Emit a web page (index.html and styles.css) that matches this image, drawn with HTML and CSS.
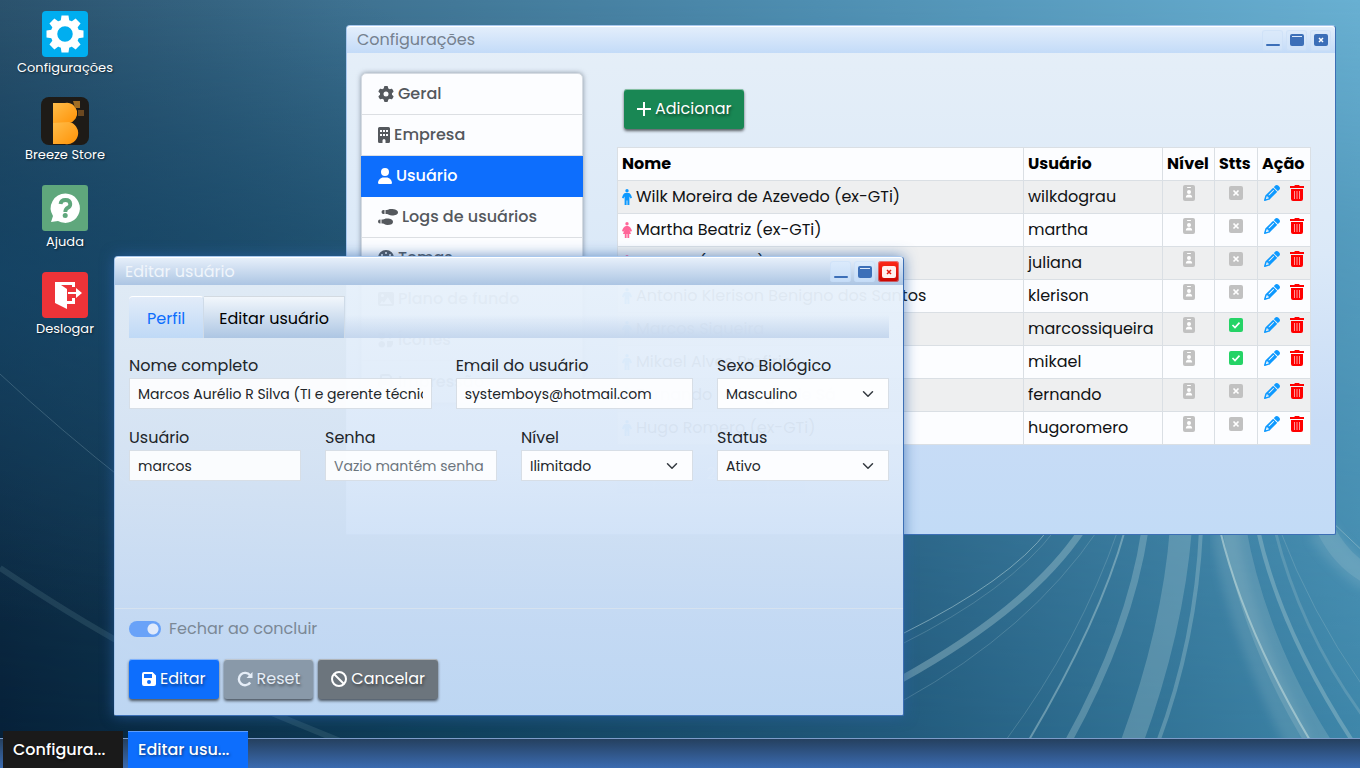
FILE: index.html
```html
<!DOCTYPE html>
<html lang="pt-BR">
<head>
<meta charset="utf-8">
<meta name="viewport" content="width=device-width, initial-scale=1">
<title>Editar usuário</title>
<link rel="stylesheet" href="styles.css">
</head>
<body>
<svg class="defs" aria-hidden="true">
  <symbol id="gear" viewBox="0 0 512 512"><path d="M495.9 166.6c3.2 8.7 .5 18.4-6.4 24.6l-43.3 39.4c1.1 8.3 1.7 16.8 1.7 25.4s-.6 17.1-1.7 25.4l43.3 39.4c6.9 6.2 9.6 15.9 6.4 24.6c-4.4 11.9-9.7 23.3-15.8 34.3l-4.7 8.1c-6.6 11-14 21.4-22.1 31.2c-5.9 7.2-15.7 9.6-24.5 6.8l-55.7-17.7c-13.4 10.3-28.2 18.9-44 25.4l-12.5 57.1c-2 9.1-9 16.3-18.2 17.8c-13.8 2.3-28 3.5-42.5 3.5s-28.7-1.2-42.5-3.5c-9.2-1.5-16.2-8.7-18.2-17.8l-12.5-57.1c-15.8-6.5-30.6-15.1-44-25.4L83.1 425.9c-8.8 2.8-18.6 .3-24.5-6.8c-8.1-9.8-15.5-20.2-22.1-31.2l-4.7-8.1c-6.1-11-11.4-22.4-15.8-34.3c-3.2-8.7-.5-18.4 6.4-24.6l43.3-39.4C64.6 273.1 64 264.6 64 256s.6-17.1 1.7-25.4L22.4 191.2c-6.9-6.2-9.6-15.9-6.4-24.6c4.4-11.9 9.7-23.3 15.8-34.3l4.7-8.1c6.6-11 14-21.4 22.1-31.2c5.9-7.2 15.7-9.6 24.5-6.8l55.7 17.7c13.4-10.3 28.2-18.9 44-25.4l12.5-57.1c2-9.1 9-16.3 18.2-17.8C227.3 1.2 241.5 0 256 0s28.7 1.2 42.5 3.5c9.2 1.5 16.2 8.7 18.2 17.8l12.5 57.1c15.8 6.5 30.6 15.1 44 25.4l55.7-17.7c8.8-2.8 18.6-.3 24.5 6.8c8.1 9.8 15.5 20.2 22.1 31.2l4.7 8.1c6.1 11 11.4 22.4 15.8 34.3zM256 336a80 80 0 1 0 0-160 80 80 0 1 0 0 160z"/></symbol>
  <symbol id="building" viewBox="0 0 384 512"><path fill-rule="evenodd" d="M48 0h288a48 48 0 0 1 48 48v416a48 48 0 0 1-48 48h-96v-80a48 48 0 0 0-96 0v80H48a48 48 0 0 1-48-48V48A48 48 0 0 1 48 0zM64 96v64h64V96zM160 96v64h64V96zM256 96v64h64V96zM64 224v64h64v-64zM160 224v64h64v-64zM256 224v64h64v-64z"/></symbol>
  <symbol id="user" viewBox="0 0 448 512"><path d="M224 256A128 128 0 1 0 224 0a128 128 0 1 0 0 256zm-45.700 48C79.800 304 0 383.800 0 482.300 0 498.700 13.300 512 29.700 512h388.600c16.400 0 29.700-13.300 29.700-29.700C448 383.800 368.200 304 269.700 304z"/></symbol>
  <symbol id="shoes" viewBox="0 0 640 512"><path d="M416 0C352 0 320 24 288 32H240v128h48c34 0 76 48 160 48 112 0 192-32 192-96S560 0 416 0zM208 32h-32a64 64 0 0 0 0 128h32zM288 304c-64 0-96 24-128 32H112v128h48c34 0 60 48 144 48 112 0 176-32 176-96S420 304 288 304zM80 336H64a64 64 0 0 0 0 128h16z"/></symbol>
  <symbol id="palette" viewBox="0 0 512 512"><path fill-rule="evenodd" d="M512 256c0 50-42 88-92 88h-76c-27 0-48 22-48 48 0 34 24 40 24 66 0 32-28 54-64 54a256 256 0 1 1 256-256zM128 288a32 32 0 1 0-64 0 32 32 0 1 0 64 0zm0-96a32 32 0 1 0 0-64 32 32 0 1 0 0 64zM288 96a32 32 0 1 0-64 0 32 32 0 1 0 64 0zm96 96a32 32 0 1 0 0-64 32 32 0 1 0 0 64z"/></symbol>
  <symbol id="image" viewBox="0 0 512 512"><path fill-rule="evenodd" d="M64 32h384a64 64 0 0 1 64 64v320a64 64 0 0 1-64 64H64a64 64 0 0 1-64-64V96a64 64 0 0 1 64-64zm80 64a48 48 0 1 0 0 96 48 48 0 1 0 0-96zm170 106-128 176-56-64-66 102h384z"/></symbol>
  <symbol id="shapes" viewBox="0 0 512 512"><path d="M20 20h200v180L120 250 20 190zM290 130 380 20l110 110-110 100zM120 290a105 105 0 1 0 1 0zM290 290h190v100l-60 100H290z"/></symbol>
  <symbol id="printer" viewBox="0 0 512 512"><path fill-rule="evenodd" d="M128 0h232l88 88v104h0a64 64 0 0 1 64 64v112a32 32 0 0 1-32 32h-32v112H64V400H32a32 32 0 0 1-32-32V256a64 64 0 0 1 64-64V64a64 64 0 0 1 64-64zm0 64v128h256V96l-32-32zm0 288v96h256v-96z"/></symbol>
  <symbol id="plus" viewBox="0 0 14 14"><path d="M6 0h2v6h6v2H8v6H6V8H0V6h6z"/></symbol>
  <symbol id="man" viewBox="0 0 10 16"><path d="M5 0a1.700 1.700 0 1 1 0 3.400A1.700 1.700 0 0 1 5 0zM3.500 4h3C8 4 9.200 6 10 8.800l-1.500.8L7.400 7.500V16H5.400v-4.500h-.8V16H2.600V7.500L1.500 9.600 0 8.800C.8 6 2 4 3.500 4z"/></symbol>
  <symbol id="woman" viewBox="0 0 10 16"><path d="M5 0a1.700 1.700 0 1 1 0 3.400A1.700 1.700 0 0 1 5 0zM4 4h2c1.500 0 3.200 2.400 4 5l-1.500.8-1.100-1.700L9 12H7.200v4H5.400v-4h-.8v4H2.800v-4H1l1.600-3.900-1.100 1.700L0 9c.8-2.600 2.500-5 4-5z"/></symbol>
  <symbol id="badge" viewBox="0 0 12 16"><rect width="12" height="16" rx="2"/><g fill="#fff"><rect x="4" y="2" width="4" height="1" rx=".5"/><circle cx="6" cy="7" r="2"/><path d="M2.800 12.500c0-2 1.300-3 3.200-3s3.200 1 3.200 3z"/></g></symbol>
  <symbol id="off" viewBox="0 0 14 14"><rect width="14" height="14" rx="2"/><path stroke="#fff" stroke-width="1.700" d="m4.500 4.500 5 5m0-5-5 5"/></symbol>
  <symbol id="on" viewBox="0 0 14 14"><rect width="14" height="14" rx="2"/><path fill="none" stroke="#fff" stroke-width="1.700" d="m3.500 7 2.500 2.500 4.500-4.800"/></symbol>
  <symbol id="pencil" viewBox="0 0 512 512"><path d="M410.300 231l11.300-11.300-33.900-33.900-62.100-62.100L291.700 89.800l-11.300 11.300-22.600 22.600L58.600 322.900c-10.400 10.400-18 23.300-22.200 37.400L1 480.700c-2.500 8.400-.2 17.500 6.100 23.700s15.300 8.500 23.700 6.100l120.300-35.400c14.100-4.200 27-11.800 37.400-22.200L387.700 253.700 410.300 231zM160 399.400l-9.100 22.700c-4 3.100-8.500 5.400-13.300 6.900L59.400 452l23-78.100c1.400-4.900 3.800-9.400 6.900-13.300l22.700-9.100v32c0 8.800 7.200 16 16 16h32zM362.700 18.700L348.300 33.200 325.700 55.800 314.300 67.100l33.900 33.900 62.100 62.100 33.900 33.900 11.300-11.300 22.600-22.600 14.500-14.500c25-25 25-65.500 0-90.500L453.300 18.700c-25-25-65.500-25-90.500 0zm-47.400 168l-144 144c-6.200 6.200-16.400 6.200-22.600 0s-6.200-16.400 0-22.600l144-144c6.200-6.200 16.400-6.200 22.600 0s6.200 16.400 0 22.600z"/></symbol>
  <symbol id="trash" viewBox="0 0 14 16"><path d="M5 0h4l.8 1H14v2H0V1h4.200zM1 4h12v10a2 2 0 0 1-2 2H3a2 2 0 0 1-2-2z"/><path stroke="#f99" d="M4.500 6v8M7 6v8m2.500-8v8"/></symbol>
  <symbol id="save" viewBox="0 0 14 14"><path fill-rule="evenodd" d="M2 0h8.500L14 3.500V12a2 2 0 0 1-2 2H2a2 2 0 0 1-2-2V2a2 2 0 0 1 2-2zm0 2v4h8V2zm5 6a2 2 0 1 0 0 4 2 2 0 0 0 0-4z"/></symbol>
  <symbol id="redo" viewBox="0 0 16 16"><path fill="none" stroke="currentColor" stroke-width="2.400" d="M13.200 11.500A6.200 6.200 0 1 1 13 4.300"/><path d="M15.500 1v6h-6z"/></symbol>
  <symbol id="ban" viewBox="0 0 16 16"><g fill="none" stroke="currentColor" stroke-width="2"><circle cx="8" cy="8" r="7"/><path d="m3 3 10 10"/></g></symbol>
  <symbol id="win-min" viewBox="0 0 14 14"><rect y="11" width="14" height="2" rx="1"/></symbol>
  <symbol id="win-max" viewBox="0 0 14 14"><rect y="1" width="14" height="12" rx="2"/><path stroke="#dceafc" d="M2 3.500h10"/></symbol>
  <symbol id="win-close" viewBox="0 0 14 14"><rect y="1" width="14" height="12" rx="2"/><path class="x" d="m5 5 4 4m0-4-4 4"/></symbol>
</svg>

<div class="desktop">
  <svg class="wallpaper" viewBox="0 0 1360 768" preserveAspectRatio="none" aria-hidden="true">
    <defs>
      <linearGradient id="sky" x1="0" x2="1" y1="0" y2="0"><stop offset="0" stop-color="#2f546d"/><stop offset=".25" stop-color="#3f7291"/><stop offset=".6" stop-color="#4f8fb2"/><stop offset="1" stop-color="#69b0d2"/></linearGradient>
      <linearGradient id="sea" x1="0" x2="1" y1="0" y2="0"><stop offset="0" stop-color="#041f37"/><stop offset=".3" stop-color="#0d3c57"/><stop offset=".66" stop-color="#20587a"/><stop offset="1" stop-color="#3d85a8"/></linearGradient>
      <linearGradient id="fade" x1="0" x2="0" y1="0" y2="1"><stop offset="0" stop-color="#000"/><stop offset=".3" stop-color="#777"/><stop offset="1" stop-color="#fff"/></linearGradient>
      <radialGradient id="mid" cx="0" cy=".36" r=".45"><stop offset="0" stop-color="#124a70" stop-opacity=".6"/><stop offset="1" stop-color="#124a70" stop-opacity="0"/></radialGradient>
      <mask id="down"><rect width="1360" height="768" fill="url(#fade)"/></mask>
      <filter id="soft"><feGaussianBlur stdDeviation="5"/></filter>
    </defs>
    <rect width="1360" height="768" fill="url(#sky)"/>
    <rect width="1360" height="768" fill="url(#sea)" mask="url(#down)"/>
    <rect width="1360" height="768" fill="url(#mid)"/>
    <g fill="none" stroke="#a6c8d0">
      <path filter="url(#soft)" stroke-width="26" stroke-opacity=".2" d="M1225 530Q1236 620 1300 745M1320 530q20 30 50 50"/>
      <path filter="url(#soft)" stroke-width="50" stroke-opacity=".3" d="M1206 -10v50"/>
      <path stroke-width="1" stroke-opacity=".6" d="M1048 530Q1010 580 904 633"/>
      <path stroke-width="1" stroke-opacity=".25" d="M1055 530Q1010 590 900 645M1098 530Q1030 630 904 700M1118 530Q1080 640 1006 740M1280 530Q1310 610 1362 685"/>
      <path stroke-width="7" stroke-opacity=".4" d="M1082 530Q1030 608 900 680"/>
      <path stroke-width="2" stroke-opacity=".5" d="M1125 530Q1100 620 1029 740"/>
      <path stroke-width="7" stroke-opacity=".35" d="M1145 530Q1130 630 1068 742"/>
      <path stroke-width="22" stroke-opacity=".32" d="M1181 528Q1173 630 1132 742"/>
      <path stroke-width="4" stroke-opacity=".35" d="M1201 530Q1196 640 1158 742"/>
      <path stroke-width="24" stroke-opacity=".25" d="M1234 528Q1254 640 1320 745"/>
      <path stroke-width="2" stroke="#b8d5d8" stroke-opacity=".65" d="M1220 530Q1244 630 1311 742"/>
      <path stroke-width="4" stroke-opacity=".4" d="M1258 530Q1280 630 1353 742"/>
      <path stroke-width="3" stroke-opacity=".25" d="M1275 530Q1300 630 1362 715"/>
      <path stroke-width="18" stroke-opacity=".2" d="M1326 530q15 30 42 45"/>
      <path stroke-width="1" stroke-opacity=".5" d="M1330 520l40 38"/>
      <path stroke-width="1" stroke-opacity=".25" d="M0 374Q60 430 130 485"/>
      <path stroke-width="6" stroke="#6c98a0" stroke-opacity=".2" d="M0 568Q70 615 130 648T350 745"/>
    </g>
  </svg>

  <nav class="shortcuts" aria-label="Atalhos">
    <button class="shortcut"><svg class="tile" viewBox="0 0 48 48"><rect x="1" y="1" width="46" height="46" rx="4" fill="#00aef0"/><g transform="translate(24 24)" fill="#fff"><path d="M-3.500-18.500h7l1 7h-9z"/><path d="M-3.500-18.500h7l1 7h-9z" transform="rotate(45)"/><path d="M-3.500-18.500h7l1 7h-9z" transform="rotate(90)"/><path d="M-3.500-18.500h7l1 7h-9z" transform="rotate(135)"/><path d="M-3.500-18.500h7l1 7h-9z" transform="rotate(180)"/><path d="M-3.500-18.500h7l1 7h-9z" transform="rotate(225)"/><path d="M-3.500-18.500h7l1 7h-9z" transform="rotate(270)"/><path d="M-3.500-18.500h7l1 7h-9z" transform="rotate(315)"/><circle r="11" fill="none" stroke="#fff" stroke-width="6.500"/></g></svg><span>Configurações</span></button>
    <button class="shortcut"><svg class="tile" viewBox="0 0 48 48"><defs><linearGradient id="amber" x1="0" y1="0" x2="1" y2="1"><stop offset="0" stop-color="#ffbd4a"/><stop offset="1" stop-color="#ff9206"/></linearGradient></defs><rect width="48" height="48" rx="8" fill="#1e1b17"/><path fill="url(#amber)" d="M12 6h12a10 10 0 0 1 4 20H12z"/><path fill="url(#amber)" d="M12 26l16-1a10.500 10.500 0 0 1-4 22H12z"/><path fill="#9f6d24" d="M32 4h7v7h-5z"/><path fill="#6b4820" d="M37 13h6v6h-6z"/></svg><span>Breeze Store</span></button>
    <button class="shortcut"><svg class="tile" viewBox="0 0 48 48"><rect x="1" y="1" width="46" height="46" rx="3" fill="#5fa77c"/><path fill="#fff" d="M24.500 9.500A14.700 14.700 0 1 1 17 37l-7 1 2-6A14.700 14.700 0 0 1 24.500 9.500z"/><path fill="none" stroke="#5fa77c" stroke-width="3.800" d="M19.500 20q.5-4 5-4t4.800 4q0 2.500-2.500 3.800t-2.500 4.200"/><circle cx="24.200" cy="31.500" r="2.500" fill="#5fa77c"/></svg><span>Ajuda</span></button>
    <button class="shortcut"><svg class="tile" viewBox="0 0 48 48"><rect x="1" y="1" width="46" height="46" rx="4" fill="#ee3338"/><path fill="#fff" d="M14 11h20v5h-3v-2H20l6 4v20l-12-6zM26 30h5v-3h3v6h-8z"/><path fill="#fff" d="M27 21h8v-4l6 5-6 5v-4h-8z"/></svg><span>Deslogar</span></button>
  </nav>

  <section class="window window-settings" aria-label="Configurações">
    <header class="titlebar"><h2>Configurações</h2>
      <div class="controls"><button aria-label="Minimizar"><svg><use href="#win-min"/></svg></button><button aria-label="Maximizar"><svg><use href="#win-max"/></svg></button><button aria-label="Fechar"><svg><use href="#win-close"/></svg></button></div>
    </header>
    <div class="settings">
      <nav class="menu">
        <a href="#"><svg class="w16"><use href="#gear"/></svg>Geral</a>
        <a href="#"><svg class="w12"><use href="#building"/></svg>Empresa</a>
        <a href="#" class="active"><svg class="w14"><use href="#user"/></svg>Usuário</a>
        <a href="#"><svg class="w20"><use href="#shoes"/></svg>Logs de usuários</a>
        <a href="#"><svg class="w16"><use href="#palette"/></svg>Temas</a>
        <a href="#"><svg class="w16"><use href="#image"/></svg>Plano de fundo</a>
        <a href="#"><svg class="w16"><use href="#shapes"/></svg>Ícones</a>
        <a href="#"><svg class="w16"><use href="#printer"/></svg>Impressão</a>
      </nav>
      <div class="users">
        <button class="btn success"><svg class="w14"><use href="#plus"/></svg>Adicionar</button>
        <div class="scroller">
          <table>
            <colgroup><col><col class="c-user"><col class="c-level"><col class="c-stts"><col class="c-action"></colgroup>
            <thead><tr><th>Nome</th><th>Usuário</th><th>Nível</th><th>Stts</th><th>Ação</th></tr></thead>
            <tbody>
              <tr><td><svg class="man"><use href="#man"/></svg>Wilk Moreira de Azevedo (ex-GTi)</td><td>wilkdograu</td><td class="mark"><svg class="w12"><use href="#badge"/></svg></td><td class="mark"><svg class="w14"><use href="#off"/></svg></td><td class="acts"><button aria-label="Editar"><svg class="w16"><use href="#pencil"/></svg></button><button aria-label="Excluir" class="del"><svg class="w14"><use href="#trash"/></svg></button></td></tr>
              <tr><td><svg class="woman"><use href="#woman"/></svg>Martha Beatriz (ex-GTi)</td><td>martha</td><td class="mark"><svg class="w12"><use href="#badge"/></svg></td><td class="mark"><svg class="w14"><use href="#off"/></svg></td><td class="acts"><button aria-label="Editar"><svg class="w16"><use href="#pencil"/></svg></button><button aria-label="Excluir" class="del"><svg class="w14"><use href="#trash"/></svg></button></td></tr>
              <tr><td><svg class="woman"><use href="#woman"/></svg>Juliana (ex-GTi)</td><td>juliana</td><td class="mark"><svg class="w12"><use href="#badge"/></svg></td><td class="mark"><svg class="w14"><use href="#off"/></svg></td><td class="acts"><button aria-label="Editar"><svg class="w16"><use href="#pencil"/></svg></button><button aria-label="Excluir" class="del"><svg class="w14"><use href="#trash"/></svg></button></td></tr>
              <tr><td><svg class="man"><use href="#man"/></svg>Antonio Klerison Benigno dos Santos</td><td>klerison</td><td class="mark"><svg class="w12"><use href="#badge"/></svg></td><td class="mark"><svg class="w14"><use href="#off"/></svg></td><td class="acts"><button aria-label="Editar"><svg class="w16"><use href="#pencil"/></svg></button><button aria-label="Excluir" class="del"><svg class="w14"><use href="#trash"/></svg></button></td></tr>
              <tr><td><svg class="man"><use href="#man"/></svg>Marcos Siqueira</td><td>marcossiqueira</td><td class="mark"><svg class="w12"><use href="#badge"/></svg></td><td class="mark on"><svg class="w14"><use href="#on"/></svg></td><td class="acts"><button aria-label="Editar"><svg class="w16"><use href="#pencil"/></svg></button><button aria-label="Excluir" class="del"><svg class="w14"><use href="#trash"/></svg></button></td></tr>
              <tr><td><svg class="man"><use href="#man"/></svg>Mikael Alves Profirio</td><td>mikael</td><td class="mark"><svg class="w12"><use href="#badge"/></svg></td><td class="mark on"><svg class="w14"><use href="#on"/></svg></td><td class="acts"><button aria-label="Editar"><svg class="w16"><use href="#pencil"/></svg></button><button aria-label="Excluir" class="del"><svg class="w14"><use href="#trash"/></svg></button></td></tr>
              <tr><td><svg class="man"><use href="#man"/></svg>Fernando Nobrega de Sá</td><td>fernando</td><td class="mark"><svg class="w12"><use href="#badge"/></svg></td><td class="mark"><svg class="w14"><use href="#off"/></svg></td><td class="acts"><button aria-label="Editar"><svg class="w16"><use href="#pencil"/></svg></button><button aria-label="Excluir" class="del"><svg class="w14"><use href="#trash"/></svg></button></td></tr>
              <tr><td><svg class="man"><use href="#man"/></svg>Hugo Romero (ex-GTi)</td><td>hugoromero</td><td class="mark"><svg class="w12"><use href="#badge"/></svg></td><td class="mark"><svg class="w14"><use href="#off"/></svg></td><td class="acts"><button aria-label="Editar"><svg class="w16"><use href="#pencil"/></svg></button><button aria-label="Excluir" class="del"><svg class="w14"><use href="#trash"/></svg></button></td></tr>
              <tr><td></td><td></td><td></td><td></td><td></td></tr>
            </tbody>
          </table>
        </div>
        <div class="pager"><button>‹</button><button>1</button><button>2</button><button>3</button><button>›</button></div>
      </div>
    </div>
  </section>

  <section class="window window-edit" aria-label="Editar usuário">
    <header class="titlebar"><h2>Editar usuário</h2>
      <div class="controls"><button aria-label="Minimizar"><svg><use href="#win-min"/></svg></button><button aria-label="Maximizar"><svg><use href="#win-max"/></svg></button><button aria-label="Fechar" class="close"><svg><use href="#win-close"/></svg></button></div>
    </header>
    <form class="edit">
      <div class="tabs"><button type="button">Perfil</button><button type="button" class="current">Editar usuário</button></div>
      <div class="fields">
        <label class="wide">Nome completo<input type="text" value="Marcos Aurélio R Silva (TI e gerente técnico)"></label>
        <label class="medium">Email do usuário<input type="text" value="systemboys@hotmail.com"></label>
        <label>Sexo Biológico<select><option>Masculino</option></select></label>
        <label>Usuário<input type="text" value="marcos"></label>
        <label>Senha<input type="password" placeholder="Vazio mantém senha"></label>
        <label>Nível<select><option>Ilimitado</option></select></label>
        <label>Status<select><option>Ativo</option></select></label>
      </div>
      <footer>
        <label class="switch"><input type="checkbox" checked disabled>Fechar ao concluir</label>
        <div class="actions"><button type="button" class="btn primary"><svg class="w14"><use href="#save"/></svg>Editar</button><button type="button" class="btn muted" disabled><svg class="w16"><use href="#redo"/></svg>Reset</button><button type="button" class="btn gray"><svg class="w16"><use href="#ban"/></svg>Cancelar</button></div>
      </footer>
    </form>
  </section>

  <footer class="taskbar"><button>Configura...</button><button class="active">Editar usu...</button></footer>
</div>
</body>
</html>
```

FILE: styles.css
```css
* { box-sizing: border-box; }
body { margin: 0; font: 16px/24px Poppins, Inter, "Open Sans", sans-serif; color: #212529; }
button, input, select { font: inherit; color: inherit; margin: 0; }
button { border: 0; background: none; padding: 0; white-space: nowrap; }
svg { fill: currentColor; flex: none; }
.defs { position: absolute; width: 0; height: 0; }
.w12 { width: 12px; height: 16px; }
.w14 { width: 14px; height: 16px; }
.w16 { width: 16px; height: 16px; }
.w20 { width: 20px; height: 16px; }

.desktop { position: relative; height: 100vh; overflow: hidden; display: flex; flex-direction: column; justify-content: space-between; }
.wallpaper { position: absolute; inset: 0; width: 100%; height: 100%; }

.shortcuts { position: relative; display: flex; flex-direction: column; gap: 19px; width: 130px; padding-top: 10px; }
.shortcut { display: flex; flex-direction: column; align-items: center; color: #fff; font-size: 13px; line-height: 20px; text-shadow: 1px 1px 2px #0008; }
.tile { width: 48px; height: 48px; }

.window { position: absolute; display: flex; flex-direction: column; border: 1px solid #a9c8ee; border-right-color: #3d6fb5; border-bottom-color: #3d6fb5; border-radius: 4px 4px 2px 2px; }
.window-settings { left: 346px; right: 24px; top: 25px; min-height: 510px; background: linear-gradient(#e6eff8, #dbe9f8 45%, #c8dcf6 78%, #c2dbf6); }
.window-edit { left: 114px; width: 790px; top: 256px; min-height: 460px; background: linear-gradient(#e9f2fbf5, #dce9f9f5 45%, #c7dcf6fa 80%, #bfd8f4fc); box-shadow: 0 0 14px #2c62a9b0; }
.titlebar { display: flex; justify-content: space-between; align-items: center; height: 27px; padding: 0 4px 0 10px; border-top: 1px solid #fff; border-radius: 4px 4px 0 0; background: linear-gradient(#e3eefb, #c3dbf8); }
.titlebar h2 { margin: 0; font-size: 16px; font-weight: 400; color: #75818f; }
.window-edit .titlebar { height: 28px; background: linear-gradient(#e6effa, #acc5e3); }
.window-edit .titlebar h2 { color: #f0f5fb; }
.controls { display: flex; gap: 3px; color: #3c6fb8; }
.controls button { display: grid; place-items: center; width: 21px; height: 21px; border-radius: 3px; background: #d7e7fa80; box-shadow: inset 0 0 0 1px #c4daf566; }
.window-edit .controls button { background: linear-gradient(#dcebfc, #c5dcf7); }
.controls svg { width: 14px; height: 14px; }
.window-edit .controls .close { color: #fff0ee; background: linear-gradient(#ff2a18, #c80400); }
.close svg { --x: #e2170c; }
.x { stroke: var(--x, #fff); stroke-width: 1.5; }

.settings { display: flex; align-items: flex-start; gap: 34px; padding: 20px 24px 16px 14px; }
.menu { flex: none; width: 222px; display: flex; flex-direction: column; border: 1px solid #d5dbe2; border-radius: 5px; background: #fcfdff; color: #54585d; font-weight: 500; box-shadow: 0 0 5px #4b566599; }
.menu a { display: flex; align-items: center; gap: 4px; height: 41px; padding: 0 16px; border-bottom: 1px solid #dcdfe3; color: inherit; text-decoration: none; }
.menu a:last-child { border-bottom: 0; }
.menu .active { margin: 0 -1px; padding: 0 17px; background: #0d6efd; color: #fff; border-color: #0d6efd; }
.users { flex: 1; min-width: 0; padding-top: 16px; }
.btn { display: inline-flex; align-items: center; gap: 4px; height: 40px; padding: 0 13px; border-radius: 3px; color: #fff; text-shadow: 1px 2px 3px #0007; box-shadow: inset 0 1px #fff7, 0 2px 3px #0009; }
.success { margin-left: 7px; background: #198754; }
.scroller { height: 298px; margin-top: 18px; overflow: hidden; }
table { width: 100%; table-layout: fixed; border-collapse: collapse; background: #fcfdff; color: #101214; }
.c-user { width: 139px; }
.c-level { width: 52px; }
.c-stts { width: 43px; }
.c-action { width: 53px; }
th, td { height: 33px; padding: 4px; border: 1px solid #dadfe4; text-align: left; white-space: nowrap; line-height: 24px; }
th { font-weight: 700; color: #000; }
tbody tr:nth-child(odd) { background: #eeeff0; }
td svg { vertical-align: top; }
.man, .woman { width: 10px; height: 16px; margin: 4px 4px 0 0; color: #0d99ff; }
.woman { color: #ff6699; }
.mark { text-align: center; color: #c1c1c1; }
.mark.on { color: #25d366; }
.acts { padding: 4px 6px; }
.acts button { height: 16px; vertical-align: top; line-height: 16px; color: #0d99ff; }
.acts .del { margin-left: 10px; color: #f00; }
.pager { display: flex; gap: 2px; margin-top: 10px; }
.pager button { width: 36px; height: 38px; background: #b5d2f5; color: #fff; }

.edit { flex: 1; display: flex; flex-direction: column; }
.tabs { display: flex; margin: 11px 14px 16px; height: 42px; background: linear-gradient(#c9daf000 45%, #c5d7ee); }
.tabs button { padding: 2px 18px 0; border-right: 1px solid #cfdbe8; border-top: 1px solid #fff; border-radius: 4px 4px 0 0; color: #0d6efd; background: linear-gradient(#e2ecf9, #bfd9f6); }
.tabs .current { padding: 2px 15px 0; border-top-color: #d3dae1; border-radius: 0; color: #000; background: linear-gradient(#f2f7fc, #adc6e3); }
.fields { display: grid; grid-template-columns: repeat(12, minmax(0, 1fr)); gap: 17px 24px; padding: 0 14px; }
.fields label { grid-column: span 3; display: flex; flex-direction: column; }
.fields .wide { grid-column: span 5; }
.fields .medium { grid-column: span 4; }
.fields input, .fields select { width: 100%; height: 31px; padding: 0 8px; border: 1px solid #d7dee6; border-radius: 0; background-color: #ffffffe0; font-size: 14px; outline: 0; }
.fields input { padding-top: 2px; }
.fields select { appearance: none; background: #ffffffe8 url("data:image/svg+xml,%3Csvg xmlns='http://www.w3.org/2000/svg' viewBox='0 0 16 16'%3E%3Cpath fill='none' stroke='%23343a40' stroke-linecap='round' stroke-linejoin='round' stroke-width='2' d='m2 5 6 6 6-6'/%3E%3C/svg%3E") no-repeat right 14px center / 12px 12px; }
.fields input::placeholder { color: #6c757d; opacity: 1; }
.edit footer { margin-top: auto; padding: 8px 14px 16px; border-top: 1px solid #d6e2ef; }
.switch { display: flex; align-items: center; gap: 8px; color: #7b8896; }
.switch input { appearance: none; width: 32px; height: 16px; border-radius: 8px; background: radial-gradient(circle at 24px 8px, #e0eafb 5px, #69a2f8 6px); }
.actions { display: flex; gap: 5px; margin-top: 18px; }
.primary { background: #0d6efd; }
.muted { background: #8999a9; color: #e5edf7; }
.gray { background: #6c757d; }

.taskbar { position: relative; display: flex; align-items: flex-end; gap: 5px; height: 30px; padding-left: 3px; border-top: 1px solid #7d9cc9; background: linear-gradient(#25405f, #3b6bb0); }
.taskbar button { flex: none; width: 120px; height: 37px; padding: 0 10px; text-align: left; color: #fff; font-weight: 500; background: #1a1a1a; text-shadow: 1px 1px 3px #0008; }
.taskbar .active { background: #0d6efd; border-top: 1px solid #5b9cff; }
```
